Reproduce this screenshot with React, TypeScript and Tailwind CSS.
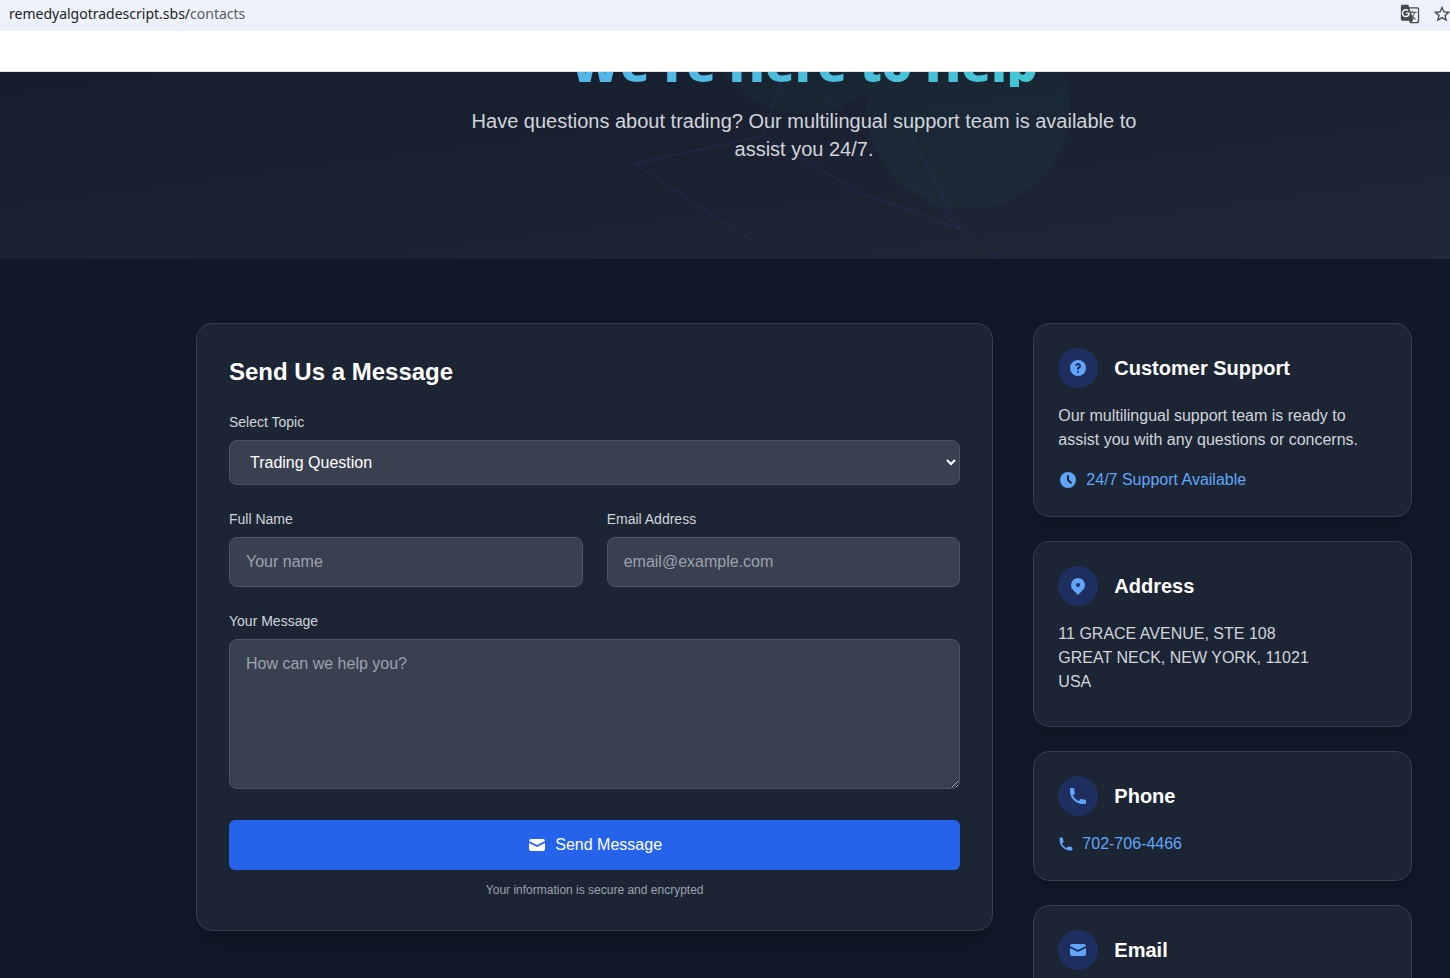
import { useState } from "react";
import type { ReactNode } from "react";
import { MdGTranslate } from "react-icons/md";

const labelClass = "mb-2 block text-sm leading-5 text-[#d1d5db]";
const fieldClass =
  "block w-full rounded-lg border border-[#4b5563] bg-[#394150] px-4 py-3 text-base leading-6 text-white placeholder:text-[#9ca3af]";

function EnvelopeIcon({ className }: { className: string }) {
  return (
    <svg viewBox="0 0 20 20" fill="currentColor" className={className} aria-hidden="true">
      <path d="M2.003 5.884L10 9.882l7.997-3.998A2 2 0 0016 4H4a2 2 0 00-1.997 1.884z" />
      <path d="M18 8.118l-8 4-8-4V14a2 2 0 002 2h12a2 2 0 002-2V8.118z" />
    </svg>
  );
}

function PhoneIcon({ className }: { className: string }) {
  return (
    <svg viewBox="0 0 20 20" fill="currentColor" className={className} aria-hidden="true">
      <path d="M2 3a1 1 0 011-1h2.153a1 1 0 01.986.836l.74 4.435a1 1 0 01-.54 1.06l-1.548.773a11.037 11.037 0 006.105 6.105l.774-1.548a1 1 0 011.059-.54l4.435.74a1 1 0 01.836.986V17a1 1 0 01-1 1h-2C7.82 18 2 12.18 2 5V3z" />
    </svg>
  );
}

function QuestionIcon({ className }: { className: string }) {
  return (
    <svg viewBox="0 0 20 20" fill="currentColor" className={className} aria-hidden="true">
      <path
        fillRule="evenodd"
        clipRule="evenodd"
        d="M18 10a8 8 0 11-16 0 8 8 0 0116 0zm-8-3a1 1 0 00-.867.5 1 1 0 11-1.731-1A3 3 0 0113 8a3.001 3.001 0 01-2 2.83V11a1 1 0 11-2 0v-1a1 1 0 011-1 1 1 0 100-2zm0 8a1 1 0 100-2 1 1 0 000 2z"
      />
    </svg>
  );
}

function ClockIcon({ className }: { className: string }) {
  return (
    <svg viewBox="0 0 20 20" fill="currentColor" className={className} aria-hidden="true">
      <path
        fillRule="evenodd"
        clipRule="evenodd"
        d="M10 18a8 8 0 100-16 8 8 0 000 16zm1-12a1 1 0 10-2 0v4a1 1 0 00.293.707l2.828 2.829a1 1 0 101.415-1.415L11 9.586V6z"
      />
    </svg>
  );
}

function PinIcon({ className }: { className: string }) {
  return (
    <svg viewBox="0 0 20 20" fill="currentColor" className={className} aria-hidden="true">
      <path
        fillRule="evenodd"
        clipRule="evenodd"
        d="M5.05 4.05a7 7 0 119.9 9.9L10 18.9l-4.95-4.95a7 7 0 010-9.9zM10 11a2 2 0 100-4 2 2 0 000 4z"
      />
    </svg>
  );
}

function StarIcon({ className }: { className: string }) {
  return (
    <svg viewBox="0 0 24 24" fill="currentColor" className={className} aria-hidden="true">
      <path d="M22 9.24l-7.19-.62L12 2 9.19 8.63 2 9.24l5.46 4.73L5.82 21 12 17.27 18.18 21l-1.63-7.03L22 9.24zM12 15.4l-3.76 2.27 1-4.28-3.32-2.88 4.38-.38L12 6.1l1.71 4.04 4.38.38-3.32 2.88 1 4.28L12 15.4z" />
    </svg>
  );
}

function AddressBar() {
  return (
    <header>
      <div className="flex items-center justify-between bg-[#ecf1fa] pb-1 pl-[9px] font-['Noto_Sans',sans-serif]">
        <p className="text-sm leading-[27px] text-[#1f1f1f]">
          remedyalgotradescript.sbs/<span className="text-[#5a5c60]">contacts</span>
        </p>
        <div className="flex items-center gap-3 text-[#45474b]">
          <button type="button" aria-label="Translate this page">
            <MdGTranslate className="size-5" />
          </button>
          <button type="button" aria-label="Bookmark this page" className="-mr-0.5">
            <StarIcon className="size-5" />
          </button>
        </div>
      </div>
      <div className="h-[41px] border-b border-[#dcdfe4] bg-white" />
    </header>
  );
}

function Hero() {
  return (
    <section className="relative overflow-hidden bg-linear-to-br from-[#161d2d] to-[#1f2836] pb-24 pl-[158px]">
      <div className="absolute inset-y-0 left-[604px] w-[500px]">
        <svg viewBox="0 0 500 187" className="h-[187px] w-[500px]" fill="none" aria-hidden="true">
          <circle cx="201" cy="-60" r="102" fill="#10b981" fillOpacity="0.035" />
          <circle cx="364" cy="35" r="102" fill="#10b981" fillOpacity="0.035" />
          <g stroke="#4f46e5" strokeOpacity="0.2">
            <path d="M151 170L30 92L158 64L258 121L356 157L397 187" />
            <path d="M182 0L158 64" />
            <path d="M198 0L356 157L300 50" />
          </g>
        </svg>
      </div>
      <div className="relative -mt-[31px] text-center">
        <h1 className="bg-linear-to-r from-[#60a5fa] to-[#2dd4bf] bg-clip-text font-['Open_Sans',sans-serif] text-5xl leading-[46px] font-extrabold text-transparent">
          We&apos;re Here to Help
        </h1>
        <p className="mx-auto mt-5 max-w-2xl text-xl leading-7 text-[#d1d5db]">
          Have questions about trading? Our multilingual support team is available to assist you 24/7.
        </p>
      </div>
    </section>
  );
}

function ContactForm() {
  const [topic, setTopic] = useState("Trading Question");
  return (
    <form
      onSubmit={(event) => event.preventDefault()}
      className="rounded-2xl border border-[#343e4d] bg-[#1c2533] p-8 shadow-xl"
    >
      <h2 className="mb-6 text-2xl leading-8 font-bold text-white">Send Us a Message</h2>
      <div className="mb-6">
        <label htmlFor="topic" className={labelClass}>Select Topic</label>
        <select
          id="topic"
          value={topic}
          onChange={(event) => setTopic(event.target.value)}
          className="block h-[45px] w-full rounded-lg border border-[#4b5563] bg-[#394150] px-4 text-base text-white"
        >
          <option>Trading Question</option>
        </select>
      </div>
      <div className="mb-6 grid grid-cols-2 gap-6">
        <div>
          <label htmlFor="name" className={labelClass}>Full Name</label>
          <input id="name" type="text" placeholder="Your name" className={fieldClass} />
        </div>
        <div>
          <label htmlFor="email" className={labelClass}>Email Address</label>
          <input id="email" type="email" placeholder="email@example.com" className={fieldClass} />
        </div>
      </div>
      <div className="mb-[31px]">
        <label htmlFor="message" className={labelClass}>Your Message</label>
        <textarea id="message" placeholder="How can we help you?" className={`${fieldClass} h-[150px]`} />
      </div>
      <button
        type="submit"
        className="flex w-full items-center justify-center gap-2 rounded-md bg-[#2563eb] py-[13px] text-base leading-6 text-white"
      >
        <EnvelopeIcon className="size-5" />
        Send Message
      </button>
      <p className="mt-3 text-center text-xs leading-4 text-[#9ca3af]">Your information is secure and encrypted</p>
    </form>
  );
}

function InfoCard({ icon, title, children }: { icon: ReactNode; title: string; children: ReactNode }) {
  return (
    <section className="rounded-2xl border border-[#343e4d] bg-[#1c2533] p-6 shadow-lg">
      <div className="mb-4 flex items-center gap-4">
        <span className="flex size-10 items-center justify-center rounded-full bg-[#1e2f5f] text-[#60a5fa]">
          {icon}
        </span>
        <h3 className="text-xl leading-7 font-bold text-white">{title}</h3>
      </div>
      {children}
    </section>
  );
}

export default function App() {
  return (
    <div className="h-screen overflow-hidden bg-[#111827] font-['Liberation_Sans',Arial,sans-serif]">
      <AddressBar />
      <Hero />
      <main className="pl-[158px]">
        <div className="mx-auto grid max-w-7xl grid-cols-3 items-start gap-10 px-8 py-16">
          <div className="col-span-2">
            <ContactForm />
          </div>
          <aside className="flex flex-col gap-6">
            <InfoCard icon={<QuestionIcon className="size-5" />} title="Customer Support">
              <p className="mb-4 text-base leading-6 text-[#d1d5db]">
                Our multilingual support team is ready to assist you with any questions or concerns.
              </p>
              <p className="flex items-center gap-2 text-base leading-6 text-[#60a5fa]">
                <ClockIcon className="size-5" />
                24/7 Support Available
              </p>
            </InfoCard>
            <InfoCard icon={<PinIcon className="size-5" />} title="Address">
              <address className="mb-2 text-base leading-6 text-[#d1d5db] not-italic">
                11 GRACE AVENUE, STE 108
                <br />
                GREAT NECK, NEW YORK, 11021
                <br />
                USA
              </address>
            </InfoCard>
            <InfoCard icon={<PhoneIcon className="size-5" />} title="Phone">
              <a href="tel:702-706-4466" className="flex items-center gap-2 text-base leading-6 text-[#60a5fa]">
                <PhoneIcon className="size-4" />
                702-706-4466
              </a>
            </InfoCard>
            <InfoCard icon={<EnvelopeIcon className="size-5" />} title="Email">
              <EnvelopeIcon className="size-4 text-[#60a5fa]" />
            </InfoCard>
          </aside>
        </div>
      </main>
    </div>
  );
}
